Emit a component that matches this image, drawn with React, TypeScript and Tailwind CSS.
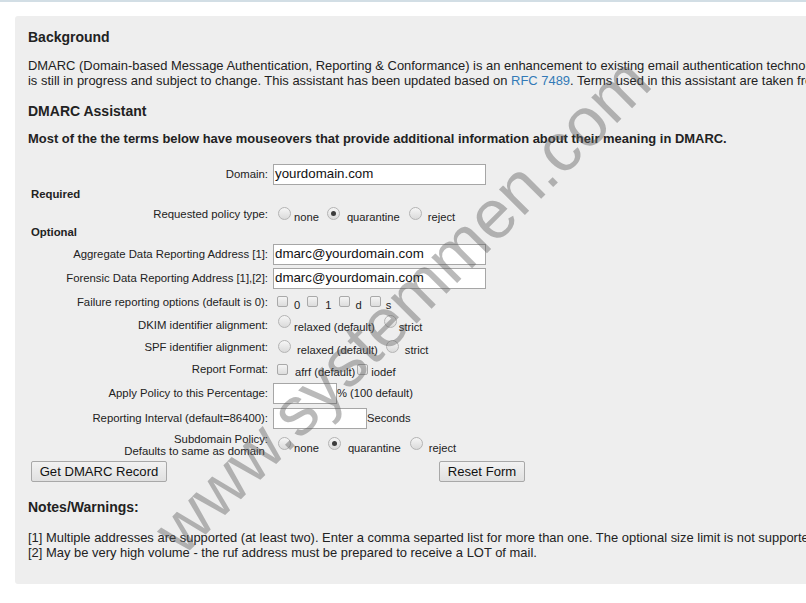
import React from "react";

function Radio({ checked = false, className = "" }: { checked?: boolean; className?: string }) {
  return (
    <span
      className={`flex h-[13px] w-[13px] shrink-0 items-center justify-center rounded-full border border-[#b4b4b4] bg-linear-to-b from-[#f6f6f6] to-[#dadada] ${className}`}
    >
      {checked && <span className="h-[5px] w-[5px] rounded-full bg-[#3c3c3c]" />}
    </span>
  );
}

function Check({ className = "" }: { className?: string }) {
  return (
    <span
      className={`block h-[11px] w-[11px] shrink-0 rounded-[2px] border border-[#a9a9a9] bg-linear-to-b from-[#f4f4f4] to-[#dddddd] ${className}`}
    />
  );
}

function Row({ label, h, children }: { label: React.ReactNode; h: string; children?: React.ReactNode }) {
  return (
    <div className={`flex items-center ${h}`}>
      <div className="w-[237px] shrink-0 text-right leading-[13px]">{label}</div>
      <div className="ml-[5px] flex items-center text-[11.2px]">{children}</div>
    </div>
  );
}

function TextBox({ value = "", w }: { value?: string; w: string }) {
  return (
    <div
      className={`flex h-[21px] items-center border border-[#a6a6a6] bg-white pl-[1px] text-[13.3px] text-[#111] ${w}`}
    >
      {value}
    </div>
  );
}

export default function App() {
  return (
    <div className="relative h-[603px] w-[806px] overflow-hidden bg-white font-['Liberation_Sans',Arial,sans-serif] text-[#222]">
      <div className="h-[2px] bg-[#d2dee5]" />

      <div className="ml-[15px] mt-[14px] w-[1200px] rounded-[3px] bg-[#eeeeee] pb-[24px] pl-[13px] pt-[13px]">
        <h3 className="text-[14px] font-bold leading-[16px]">Background</h3>
        <p className="mt-[13px] whitespace-nowrap text-[12.95px] leading-[15px]">
          DMARC (Domain-based Message Authentication, Reporting &amp; Conformance) is an enhancement to existing email
          authentication technologies. The specification
          <br />
          is still in progress and subject to change. This assistant has been updated based on{" "}
          <a className="text-[#337ab7]">RFC 7489</a>. Terms used in this assistant are taken from the specification.
        </p>

        <h3 className="mt-[15px] text-[14px] font-bold leading-[16px]">DMARC Assistant</h3>
        <p className="mt-[12px] whitespace-nowrap text-[12.95px] font-bold leading-[15px]">
          Most of the the terms below have mouseovers that provide additional information about their meaning in DMARC.
        </p>

        <div className="ml-[3px] mt-[16px] w-[494px] text-[11.35px]">
          <Row label="Domain:" h="h-[24px]">
            <TextBox value="yourdomain.com" w="w-[213px]" />
          </Row>
          <div className="flex h-[18px] items-center font-bold">Required</div>
          <Row label="Requested policy type:" h="h-[20px]">
            <Radio className="mb-[2px] ml-[5px]" />
            <span className="ml-[3px] mt-[7px]">none</span>
            <Radio checked className="mb-[2px] ml-[8px]" />
            <span className="ml-[7px] mt-[7px]">quarantine</span>
            <Radio className="mb-[2px] ml-[9px]" />
            <span className="ml-[6px] mt-[7px]">reject</span>
          </Row>
          <div className="flex h-[18px] items-center font-bold">Optional</div>
          <Row label="Aggregate Data Reporting Address [1]:" h="h-[24px]">
            <TextBox value="dmarc@yourdomain.com" w="w-[213px]" />
          </Row>
          <Row label="Forensic Data Reporting Address [1],[2]:" h="h-[24px]">
            <TextBox value="dmarc@yourdomain.com" w="w-[213px]" />
          </Row>
          <Row label="Failure reporting options (default is 0):" h="h-[24px]">
            <Check className="ml-[4px]" />
            <span className="ml-[6px] mt-[6px]">0</span>
            <Check className="ml-[7px]" />
            <span className="ml-[7px] mt-[6px]">1</span>
            <Check className="ml-[8px]" />
            <span className="ml-[5px] mt-[6px]">d</span>
            <Check className="ml-[8px]" />
            <span className="ml-[5px] mt-[6px]">s</span>
          </Row>
          <Row label="DKIM identifier alignment:" h="h-[22px]">
            <Radio className="mb-[6px] ml-[5px]" />
            <span className="ml-[3px] mt-[4px]">relaxed (default)</span>
            <Radio className="mb-[6px] ml-[9px]" />
            <span className="ml-[2px] mt-[4px]">strict</span>
          </Row>
          <Row label="SPF identifier alignment:" h="h-[22px]">
            <Radio className="mb-[2px] ml-[5px]" />
            <span className="ml-[6px] mt-[7px]">relaxed (default)</span>
            <Radio className="mb-[2px] ml-[8px]" />
            <span className="ml-[6px] mt-[7px]">strict</span>
          </Row>
          <Row label="Report Format:" h="h-[22px]">
            <Check className="ml-[4px]" />
            <span className="ml-[7px] mt-[6px]">afrf (default)</span>
            <Check className="ml-[2px]" />
            <span className="ml-[3px] mt-[6px]">iodef</span>
          </Row>
          <Row label="Apply Policy to this Percentage:" h="h-[26px]">
            <TextBox w="w-[64px]" />
            <span>% (100 default)</span>
          </Row>
          <Row label="Reporting Interval (default=86400):" h="h-[25px]">
            <TextBox w="w-[94px]" />
            <span>Seconds</span>
          </Row>
          <Row
            label={
              <span className="block leading-[12px]">
                Subdomain Policy:
                <br />
                Defaults to same as domain&nbsp;
              </span>
            }
            h="h-[27px]"
          >
            <Radio className="mb-[2px] ml-[5px]" />
            <span className="ml-[3px] mt-[8px]">none</span>
            <Radio checked className="mb-[2px] ml-[9px]" />
            <span className="ml-[7px] mt-[8px]">quarantine</span>
            <Radio className="mb-[2px] ml-[9px]" />
            <span className="ml-[6px] mt-[8px]">reject</span>
          </Row>
          <div className="flex h-[27px] items-center justify-between">
            <button className="h-[21px] w-[136px] rounded-[2px] border border-[#a8a8a8] bg-linear-to-b from-[#f2f2f2] to-[#e0e0e0] text-[13.1px] text-[#111]">
              Get DMARC Record
            </button>
            <button className="h-[21px] w-[86px] rounded-[2px] border border-[#a8a8a8] bg-linear-to-b from-[#f2f2f2] to-[#e0e0e0] text-[13.1px] text-[#111]">
              Reset Form
            </button>
          </div>
        </div>

        <h3 className="mt-[14px] text-[14px] font-bold leading-[16px]">Notes/Warnings:</h3>
        <p className="mt-[15px] whitespace-nowrap text-[12.95px] leading-[15px]">
          [1] Multiple addresses are supported (at least two). Enter a comma separted list for more than one. The optional
          size limit is not supported.
          <br />
          [2] May be very high volume - the ruf address must be prepared to receive a LOT of mail.
        </p>
      </div>

      <div className="pointer-events-none absolute left-[402px] top-[305px] -translate-x-1/2 -translate-y-1/2 -rotate-45 whitespace-nowrap text-[69px] leading-none text-[rgba(90,90,90,0.42)]">
        www.systemmen.com
      </div>
    </div>
  );
}
